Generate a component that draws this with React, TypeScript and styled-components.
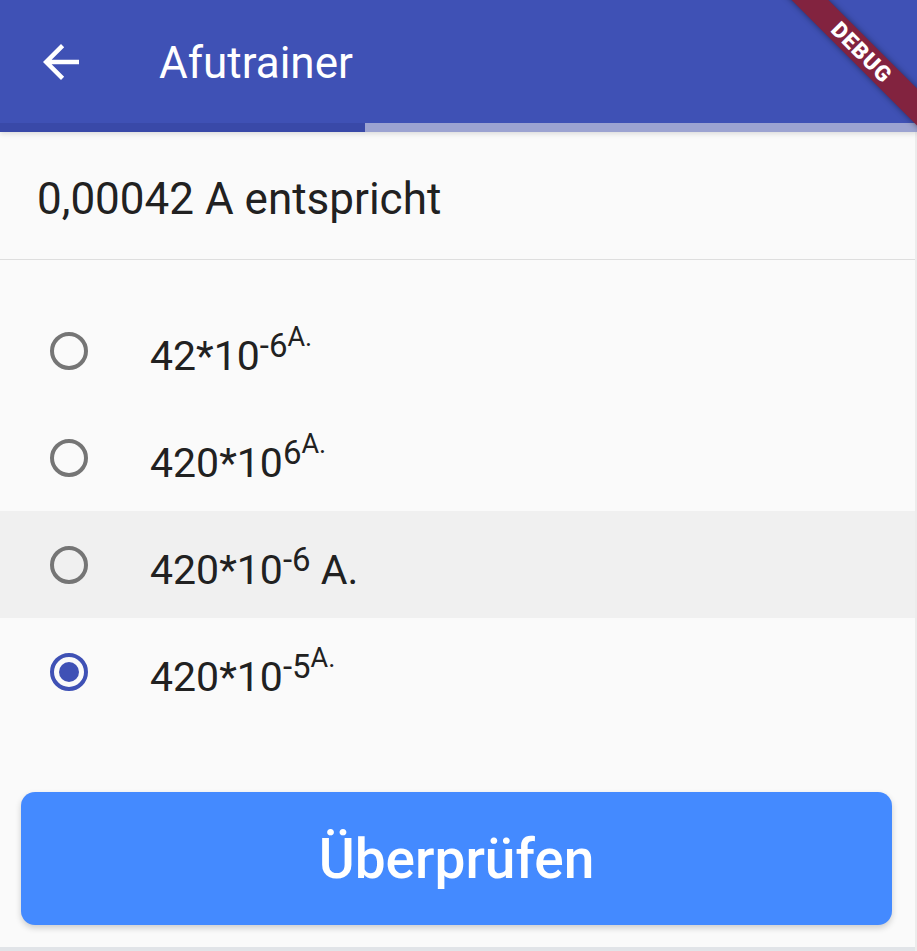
import type { FC, ReactNode } from 'react'
import styled, { createGlobalStyle } from 'styled-components'

// Farben wie im Material-Theme (Indigo)
const INDIGO = '#3F51B5'
const TEXT = '#212121'

const GlobalStyle = createGlobalStyle`
  html, body {
    margin: 0;
    padding: 0;
    background: #fafafa;
  }
  body {
    font-family: Roboto, 'Liberation Sans', sans-serif;
    color: ${TEXT};
  }
  * {
    box-sizing: border-box;
  }
`

const Page = styled.div`
  position: relative;
  width: 917px;
  height: 951px;
  display: flex;
  flex-direction: column;
  overflow: hidden;
  background: #fafafa;
`

const TopBar = styled.header`
  display: flex;
  flex-direction: column;
  box-shadow: 0 2px 5px rgba(0, 0, 0, 0.12);
  z-index: 1;
`

const AppBar = styled.div`
  height: 123px;
  background: ${INDIGO};
  display: flex;
  align-items: center;
  padding-left: 34px;
  gap: 71px;
  color: #fff;
`

const Title = styled.h1`
  margin: 0;
  padding-top: 2px;
  font-size: 44px;
  font-weight: 400;
  color: #fff;
`

const Progress = styled.div`
  height: 9px;
  display: flex;
  background: #9ca3d1;
`

const ProgressFill = styled.div`
  height: 100%;
  background: #3949a8;
`

const Body = styled.main`
  flex: 1;
  display: flex;
  flex-direction: column;
  border-right: 2px solid #ececec;
`

const Question = styled.div`
  height: 128px;
  display: flex;
  align-items: center;
  padding: 7px 0 0 37px;
  border-bottom: 1px solid #dedede;
  font-size: 44px;
`

const Options = styled.div`
  display: flex;
  flex-direction: column;
  padding-top: 37px;
`

const Row = styled.div<{ $active?: boolean }>`
  height: 107px;
  display: flex;
  align-items: center;
  gap: 62px;
  padding-left: 50px;
  background: ${(p) => (p.$active ? '#f0f0f0' : 'transparent')};
`

const Radio = styled.span<{ $checked?: boolean }>`
  position: relative;
  width: 38px;
  height: 38px;
  flex: none;
  border-radius: 50%;
  border: 4px solid ${(p) => (p.$checked ? INDIGO : '#757575')};

  &::after {
    content: '';
    display: ${(p) => (p.$checked ? 'block' : 'none')};
    position: absolute;
    left: 5px;
    top: 5px;
    width: 20px;
    height: 20px;
    border-radius: 50%;
    background: ${INDIGO};
  }
`

const Label = styled.span`
  padding-top: 11px;
  font-size: 41px;
  white-space: nowrap;
`

const Exp = styled.sup`
  font-size: 33px;
  line-height: 0;
  vertical-align: 13px;
`

const Unit = styled.sup`
  font-size: 27px;
  line-height: 0;
  vertical-align: 11px;
`

const Actions = styled.div`
  flex: 1;
  display: flex;
  flex-direction: column;
  padding: 67px 23px 0 21px;
`

const CheckButton = styled.button`
  height: 133px;
  border: none;
  border-radius: 14px;
  background: #448aff;
  color: #fff;
  font-family: Roboto, 'Liberation Sans', sans-serif;
  font-size: 55px;
  font-weight: 500;
  box-shadow: 0 3px 6px rgba(0, 0, 0, 0.18);
`

const NavEdge = styled.div`
  height: 4px;
  background: #e1e4e8;
`

const BannerClip = styled.div`
  position: absolute;
  top: 0;
  right: 0;
  width: 160px;
  height: 160px;
  overflow: hidden;
  pointer-events: none;
  z-index: 2;
`

const Banner = styled.div`
  position: absolute;
  left: -45px;
  top: 39px;
  width: 300px;
  height: 26px;
  transform: rotate(45deg);
  background: #82233f;
  box-shadow: 0 0 6px rgba(0, 0, 0, 0.45);
  display: flex;
  align-items: center;
  justify-content: center;
  color: #fff;
  font-family: Roboto, 'Liberation Sans', sans-serif;
  font-size: 22px;
  font-weight: 900;
  letter-spacing: 1px;
`

const BackIcon: FC = () => (
  <svg width="54" height="54" viewBox="0 0 24 24" fill="#fff">
    <path d="M20 11H7.83l5.59-5.59L12 4l-8 8 8 8 1.41-1.41L7.83 13H20v-2z" />
  </svg>
)

type Answer = { label: ReactNode; checked?: boolean; active?: boolean }

const answers: Answer[] = [
  { label: <>42*10<Exp>-6<Unit>A.</Unit></Exp></> },
  { label: <>420*10<Exp>6<Unit>A.</Unit></Exp></> },
  { label: <>420*10<Exp>-6</Exp> A.</>, active: true },
  { label: <>420*10<Exp>-5<Unit>A.</Unit></Exp></>, checked: true },
]

export default function App() {
  return (
    <Page>
      <GlobalStyle />
      <TopBar>
        <AppBar>
          <BackIcon />
          <Title>Afutrainer</Title>
        </AppBar>
        <Progress>
          <ProgressFill style={{ width: 365 }} />
        </Progress>
      </TopBar>
      <Body>
        <Question>0,00042 A entspricht</Question>
        <Options>
          {answers.map((a, i) => (
            <Row key={i} $active={a.active}>
              <Radio $checked={a.checked} />
              <Label>{a.label}</Label>
            </Row>
          ))}
        </Options>
        <Actions>
          <CheckButton>Überprüfen</CheckButton>
        </Actions>
        <NavEdge />
      </Body>
      <BannerClip>
        <Banner>DEBUG</Banner>
      </BannerClip>
    </Page>
  )
}
